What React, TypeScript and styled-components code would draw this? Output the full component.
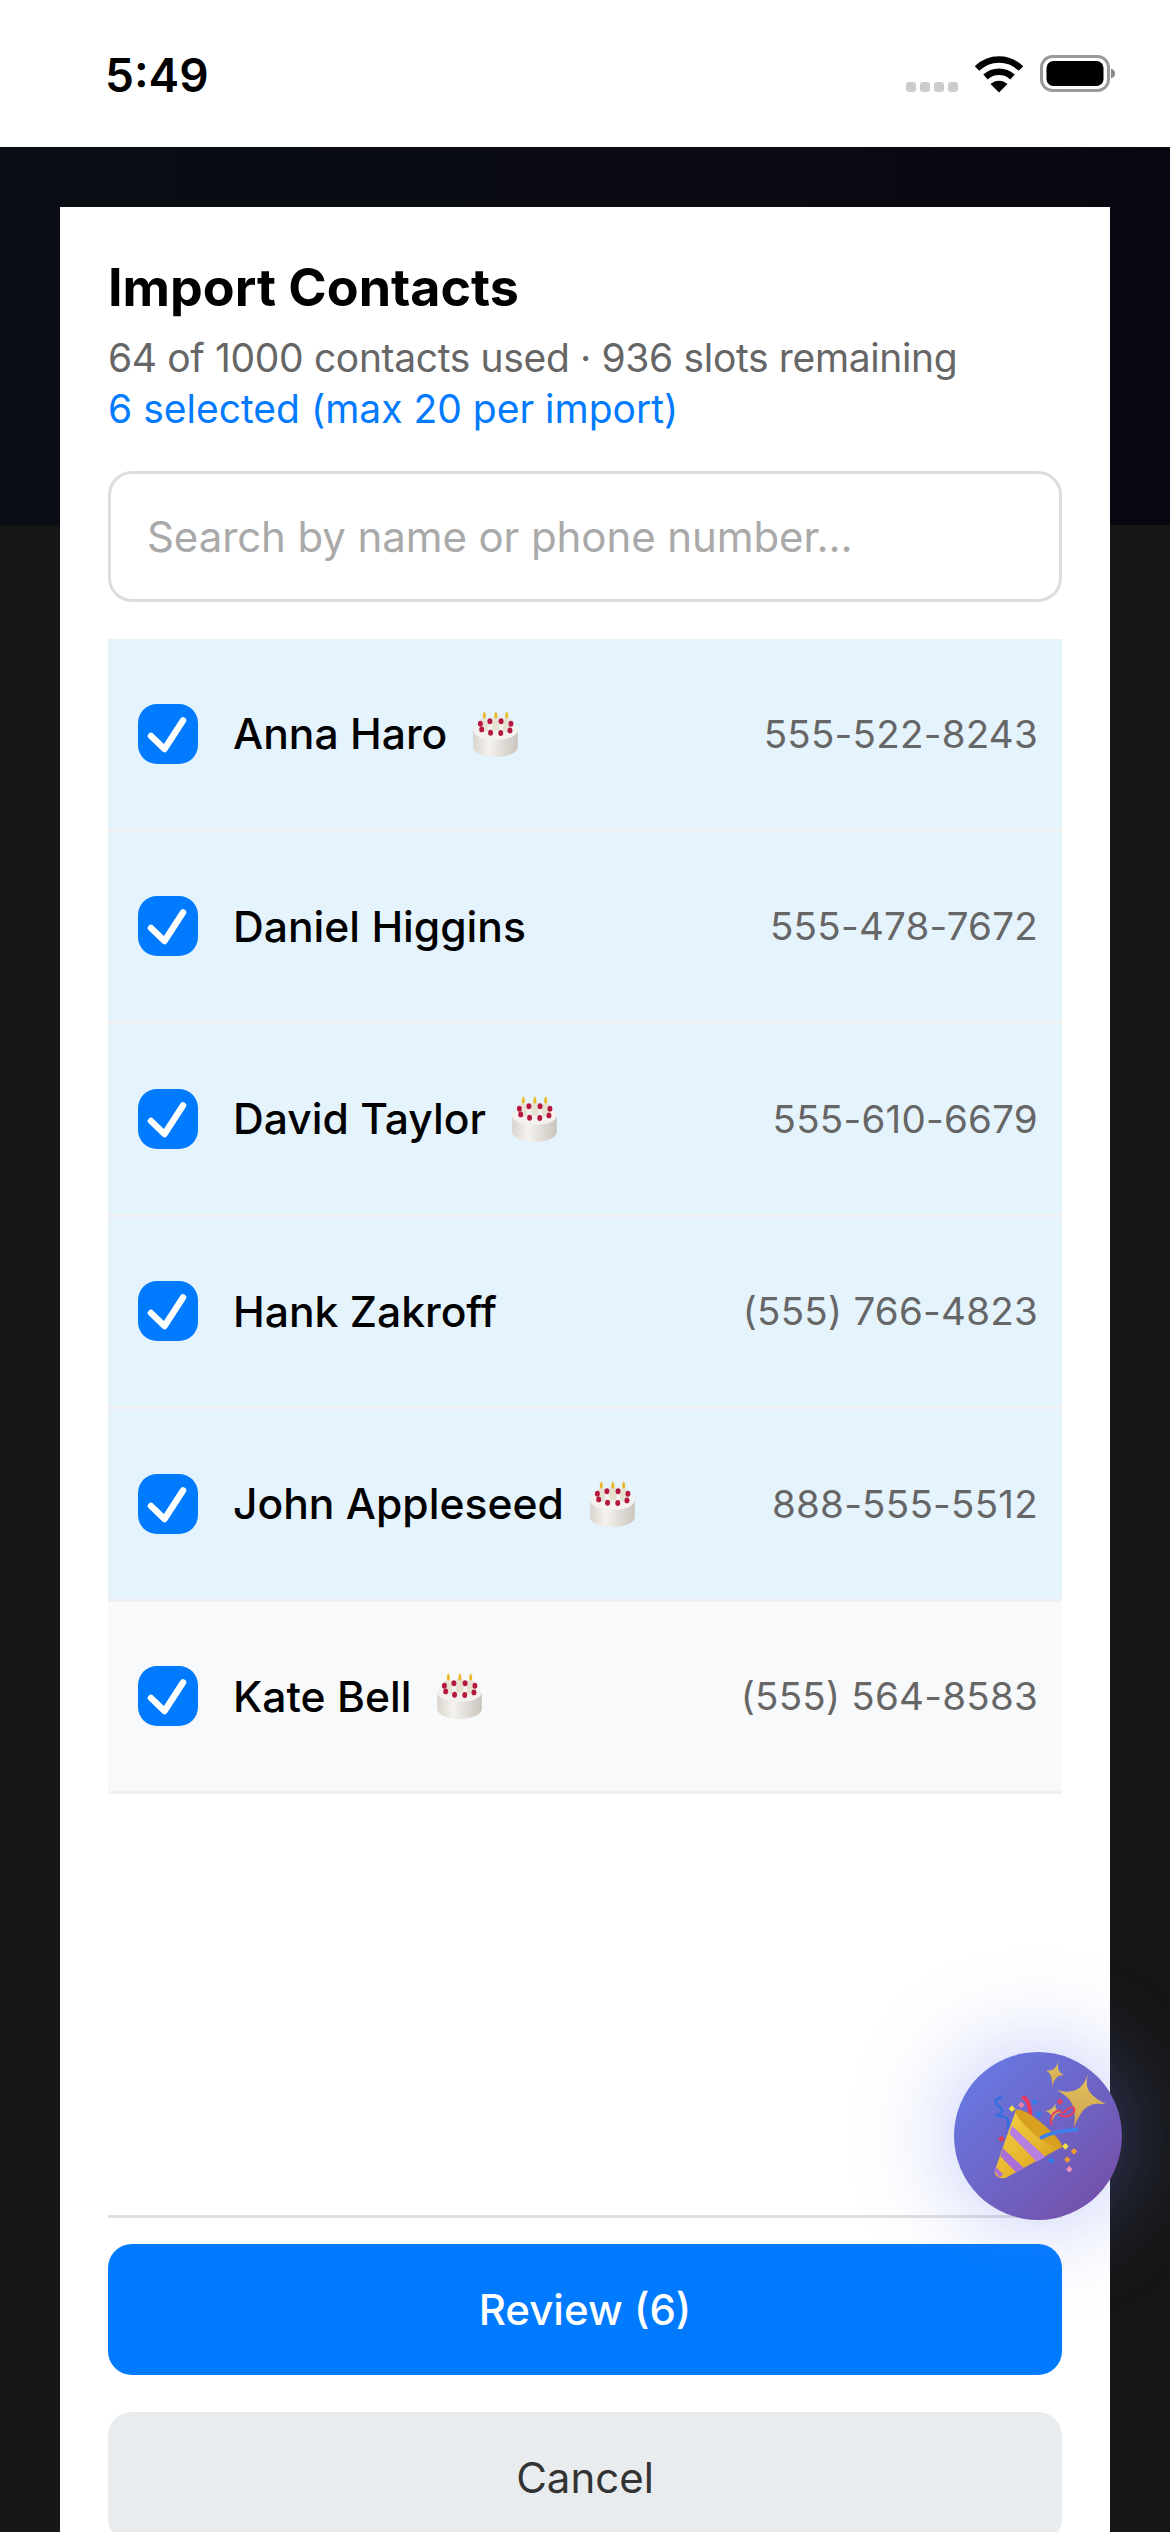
import React from 'react'
import styled, { createGlobalStyle } from 'styled-components'

interface Contact {
    name: string
    phone: string
    birthday?: boolean
    tint: 'selected' | 'plain'
}

const contacts: Contact[] = [
    { name: 'Anna Haro', phone: '555-522-8243', birthday: true, tint: 'selected' },
    { name: 'Daniel Higgins', phone: '555-478-7672', tint: 'selected' },
    { name: 'David Taylor', phone: '555-610-6679', birthday: true, tint: 'selected' },
    { name: 'Hank Zakroff', phone: '(555) 766-4823', tint: 'selected' },
    { name: 'John Appleseed', phone: '888-555-5512', birthday: true, tint: 'selected' },
    { name: 'Kate Bell', phone: '(555) 564-8583', birthday: true, tint: 'plain' },
]

const Global = createGlobalStyle`
    html, body {
        margin: 0;
        padding: 0;
        width: 1170px;
        height: 2532px;
        overflow: hidden;
        background: #fff;
    }
    * {
        box-sizing: border-box;
    }
`

const Screen = styled.div`
    width: 1170px;
    height: 2532px;
    display: flex;
    flex-direction: column;
    overflow: hidden;
    font-family: Inter, "Liberation Sans", sans-serif;
`
const StatusBar = styled.div`
    height: 147px;
    flex: none;
    display: flex;
    align-items: flex-start;
    justify-content: space-between;
    padding: 50px 55px 0 105px;
    background: #fff;
`
const Time = styled.span`
    font-size: 46px;
    line-height: 50px;
    font-weight: 600;
    color: #000;
`
const StatusIcons = styled.div`
    display: flex;
    align-items: flex-start;
    padding-top: 5px;
`
const SignalDots = styled.div`
    display: flex;
    gap: 4px;
    margin: 27px 17px 0 0;
`
const SignalDot = styled.span`
    width: 10px;
    height: 10px;
    border-radius: 3px;
    background: #cccccc;
`
const Backdrop = styled.div`
    position: relative;
    flex: 1;
    display: flex;
    flex-direction: column;
    background: #161616;
`
const DarkBand = styled.div`
    height: 378px;
    flex: none;
    background: linear-gradient(90deg, #0a0d14, #0a0a12 70%, #08060e);
`
const Modal = styled.div`
    position: absolute;
    top: 60px;
    left: 60px;
    width: 1050px;
    height: 2390px;
    display: flex;
    flex-direction: column;
    padding: 50px 48px 54px;
    background: #fff;
`
const Title = styled.h1`
    margin: 0;
    font-size: 52px;
    line-height: 62px;
    font-weight: 700;
    color: #000;
`
const Usage = styled.p`
    margin: 13px 0 0;
    font-size: 39px;
    line-height: 51px;
    letter-spacing: -0.35px;
    color: #666;
`
const SelectedNote = styled.p`
    margin: 0;
    font-size: 39px;
    line-height: 51px;
    color: #007aff;
`
const SearchBox = styled.div`
    height: 131px;
    margin-top: 37px;
    display: flex;
    align-items: center;
    padding: 0 36px;
    border: 3px solid #dddddd;
    border-radius: 24px;
    font-size: 42px;
    letter-spacing: -0.1px;
    color: #a9a9a9;
`
const List = styled.div`
    margin-top: 37px;
    flex: 1;
`
const Row = styled.div<{ $tint: Contact['tint'] }>`
    height: 192.5px;
    display: flex;
    align-items: center;
    padding: 0 24px 0 30px;
    background: ${p => (p.$tint === 'selected' ? '#e5f3fd' : '#f8f9fa')};
    border-bottom: 3px solid #f0f0f0;
`
const CheckBox = styled.div`
    width: 60px;
    height: 60px;
    flex: none;
    margin-right: 35px;
    border-radius: 19px;
    background: #007aff;
`
const Name = styled.span`
    font-size: 42.6px;
    font-weight: 450;
    color: #000;
`
const CakeIcon = styled.svg`
    width: 47px;
    height: 48px;
    margin-left: 25px;
`
const Phone = styled.span`
    margin-left: auto;
    font-size: 38.5px;
    letter-spacing: 0.25px;
    color: #666;
`
const Footer = styled.div`
    flex: none;
    display: flex;
    flex-direction: column;
    gap: 37px;
    padding-top: 26px;
    border-top: 3px solid #e0e0e0;
`
const Button = styled.div<{ $primary?: boolean }>`
    height: 131px;
    flex: none;
    display: flex;
    align-items: center;
    justify-content: center;
    border-radius: 24px;
    font-size: 42px;
    font-weight: ${p => (p.$primary ? 500 : 400)};
    background: ${p => (p.$primary ? '#007aff' : '#e9ecef')};
    color: ${p => (p.$primary ? '#fff' : '#333')};
`
const Fab = styled.div`
    position: absolute;
    left: 954px;
    top: 1905px;
    width: 168px;
    height: 168px;
    border-radius: 50%;
    background: linear-gradient(135deg, #667eea, #764ba2);
    box-shadow: 0 0 100px rgba(102, 126, 234, 0.45);
`
const FabArt = styled.svg`
    display: block;
    width: 168px;
    height: 168px;
`

const Wifi = () => (
    <svg width="48" height="38" viewBox="0 0 48 38" style={{ marginRight: 17 }}>
        <path d="M2 13.5C14.5 1.5 33.5 1.5 46 13.5" fill="none" stroke="#000" strokeWidth="6.5" />
        <path d="M10.5 22C18 15 30 15 37.5 22" fill="none" stroke="#000" strokeWidth="6.5" />
        <path d="M15.5 29C20.5 24.5 27.5 24.5 32.5 29L24 37.5Z" fill="#000" />
    </svg>
)

const Battery = () => (
    <svg width="75" height="37" viewBox="0 0 75 37">
        <rect x="1.5" y="1.5" width="67" height="34" rx="11" fill="none" stroke="#999" strokeWidth="3" />
        <rect x="6.5" y="6" width="57" height="25" rx="7" fill="#000" />
        <path d="M71 13.5C74 14.5 75 16.5 75 18.5C75 20.5 74 22.5 71 23.5Z" fill="#888" />
    </svg>
)

const Check = () => (
    <svg width="60" height="60" viewBox="0 0 60 60">
        <path d="M13 32L26.5 45L45 16.5" fill="none" stroke="#fff" strokeWidth="6.5" strokeLinecap="round" strokeLinejoin="round" />
    </svg>
)

const Cake = () => (
    <CakeIcon viewBox="1108 150 142 146">
        <defs>
            <linearGradient id="cakeSide" x1="0" x2="1" y1="0" y2="0">
                <stop offset="0" stopColor="#d9d5ce" />
                <stop offset="0.35" stopColor="#f5f3ef" />
                <stop offset="1" stopColor="#c9c5be" />
            </linearGradient>
        </defs>
        <path d="M1111 212V262C1111 282 1145 293 1179 293C1213 293 1247 282 1247 262V212Z" fill="url(#cakeSide)" />
        <ellipse cx="1179" cy="212" rx="68" ry="29" fill="#f4f2ee" />
        {[1145, 1180, 1213].map(x => (
            <g key={x}>
                <rect x={x - 11} y={x === 1180 ? 172 : 176} width="22" height="40" rx="3" fill="#e6e2d2" />
                <path d={`M${x} 153C${x + 7} 165 ${x + 6} 176 ${x} 176C${x - 6} 176 ${x - 7} 165 ${x} 153Z`} fill="#eab92e" />
            </g>
        ))}
        {[[1137, 209], [1164, 219], [1195, 220], [1223, 212], [1133, 192], [1162, 184], [1196, 184], [1226, 192]].map(([cx, cy]) => (
            <ellipse key={`${cx}-${cy}`} cx={cx} cy={cy} rx="7.5" ry="9" fill="#b5173f" />
        ))}
    </CakeIcon>
)

const Popper = () => (
    <FabArt viewBox="162 155 504 504">
        <defs>
            <linearGradient id="coneGold" x1="0" x2="1" y1="0" y2="1">
                <stop offset="0" stopColor="#f5d24a" />
                <stop offset="0.6" stopColor="#e6b52c" />
                <stop offset="1" stopColor="#c08a18" />
            </linearGradient>
            <linearGradient id="sparkGold" x1="0" x2="0" y1="0" y2="1">
                <stop offset="0" stopColor="#e3c85c" />
                <stop offset="1" stopColor="#d0a050" />
            </linearGradient>
        </defs>
        <path d="M477 178C470 205 475 215 493 225C472 222 464 235 455 262C458 235 455 222 437 208C455 215 470 205 477 178Z" fill="url(#sparkGold)" />
        <path d="M567 210C552 262 560 280 618 312C565 305 548 320 522 382C530 325 520 295 470 270C520 282 553 270 567 210Z" fill="url(#sparkGold)" />
        <path d="M468 305C462 322 468 330 488 336C468 338 462 345 458 365C456 345 452 338 436 332C452 330 462 322 468 305Z" fill="url(#sparkGold)" />
        <path d="M305 292C285 292 282 310 298 320C318 332 300 340 292 346C310 348 335 350 322 384" fill="none" stroke="#2f6fe0" strokeWidth="7" strokeLinecap="round" />
        <path d="M370 292C390 295 392 340 392 385" fill="none" stroke="#e8395f" strokeWidth="12" strokeLinecap="round" />
        <path d="M455 375C448 345 460 335 478 330C500 352 490 318 522 322C528 340 500 358 478 342" fill="none" stroke="#e0405f" strokeWidth="6" />
        <path d="M348 328L284 512C284 528 300 538 318 532L486 440Z" fill="url(#coneGold)" />
        <path d="M336 376L436 470L410 484L328 400Z" fill="#b77fe0" />
        <path d="M309 444L372 503L348 516L301 468Z" fill="#a96fd6" />
        <path d="M288 500L310 523L298 531L284 512Z" fill="#a96fd6" />
        <path d="M348 328C370 322 420 360 460 400C480 420 490 438 484 442C470 448 420 420 385 385C360 360 340 335 348 328Z" fill="#d89f20" />
        <path d="M424 412C455 395 490 390 530 388" fill="none" stroke="#3f7fe8" strokeWidth="11" strokeLinecap="round" />
        {[
            [336, 325, '#f6e23c'], [364, 314, '#ea7fae'], [404, 305, '#2f7fe8'], [417, 342, '#2f7fe8'],
            [304, 416, '#d63a5c'], [480, 304, '#e0405f'], [496, 438, '#f6e23c'], [522, 453, '#ee9a35'],
            [502, 478, '#ee9a35'], [454, 480, '#2f7fe8'], [508, 507, '#ee8fb8'],
        ].map(([x, y, c]) => (
            <rect key={`${x}-${y}`} x={Number(x) - 7} y={Number(y) - 7} width="14" height="14" rx="2" fill={String(c)} transform={`rotate(45 ${x} ${y})`} />
        ))}
    </FabArt>
)

const App = () => {
    return (
        <Screen>
            <Global />
            <StatusBar>
                <Time>5:49</Time>
                <StatusIcons>
                    <SignalDots>
                        <SignalDot />
                        <SignalDot />
                        <SignalDot />
                        <SignalDot />
                    </SignalDots>
                    <Wifi />
                    <Battery />
                </StatusIcons>
            </StatusBar>
            <Backdrop>
                <DarkBand />
                <Modal>
                    <Title>Import Contacts</Title>
                    <Usage>64 of 1000 contacts used · 936 slots remaining</Usage>
                    <SelectedNote>6 selected (max 20 per import)</SelectedNote>
                    <SearchBox>Search by name or phone number...</SearchBox>
                    <List>
                        {contacts.map(contact => (
                            <Row key={contact.name} $tint={contact.tint}>
                                <CheckBox>
                                    <Check />
                                </CheckBox>
                                <Name>{contact.name}</Name>
                                {contact.birthday && <Cake />}
                                <Phone>{contact.phone}</Phone>
                            </Row>
                        ))}
                    </List>
                    <Footer>
                        <Button $primary>Review (6)</Button>
                        <Button>Cancel</Button>
                    </Footer>
                </Modal>
                <Fab>
                    <Popper />
                </Fab>
            </Backdrop>
        </Screen>
    )
}

export default App
